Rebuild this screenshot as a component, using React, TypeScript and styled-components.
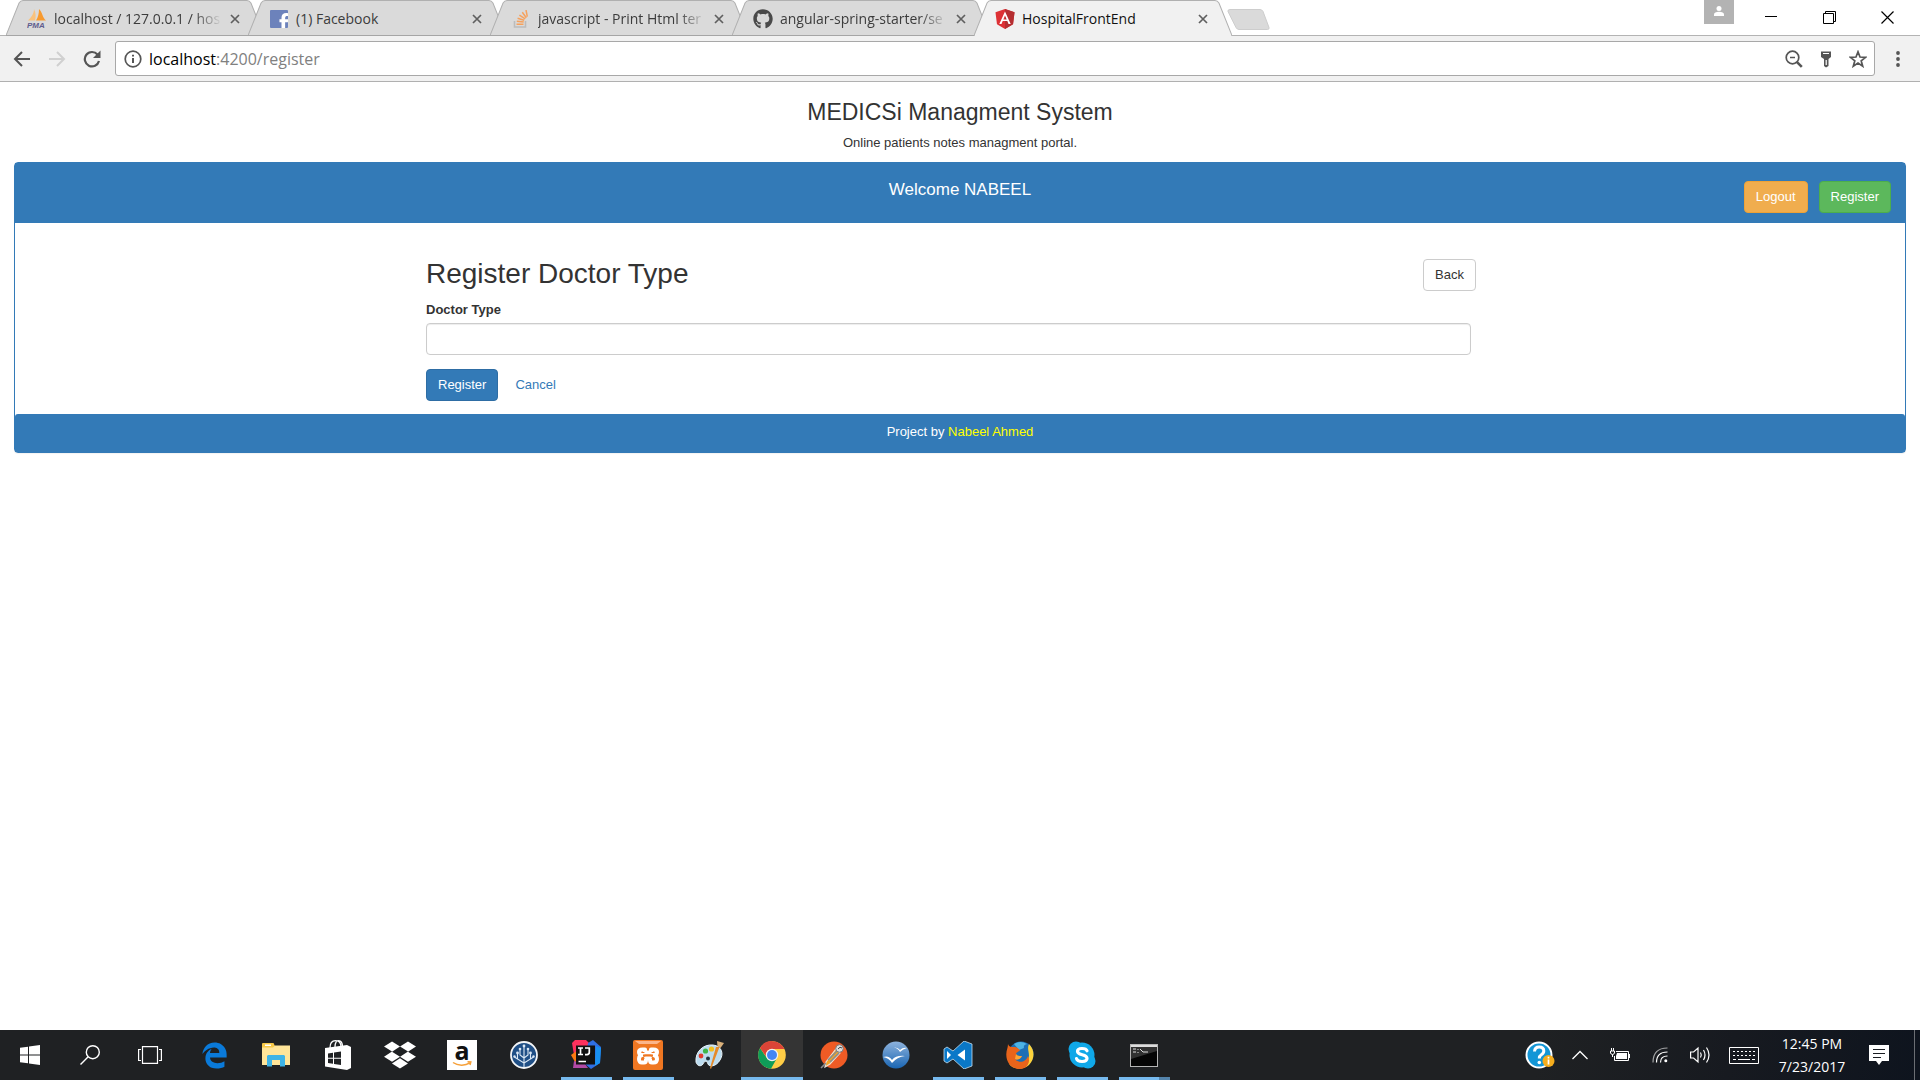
import React from "react";
import styled, { createGlobalStyle } from "styled-components";
import {
  FaDropbox,
  FaEdgeLegacy,
  FaFacebookF,
  FaGithub,
} from "react-icons/fa6";

const systemFont = `"Open Sans", "Noto Sans", sans-serif`;
const pageFont = `"Liberation Sans", Arial, sans-serif`;
const brandBlue = "#337ab7";

const GlobalStyle = createGlobalStyle`
  *, *::before, *::after { box-sizing: border-box; }
  body { margin: 0; background: #fff; }
  button, input { font: inherit; }
  svg { display: block; flex: none; }
`;

const Screen = styled.div`
  display: flex;
  flex-direction: column;
  min-height: 100vh;
  font-family: ${systemFont};
`;

/* ---------- browser window ---------- */

const TitleBar = styled.header`
  display: flex;
  align-items: flex-start;
  height: 36px;
  padding: 0 4px 0 6px;
  background: #fff;
  box-shadow: inset 0 -1px #b3b3b3;
`;

const TabList = styled.nav`
  display: flex;
  align-items: flex-start;
`;

const Tab = styled.div<{ $active?: boolean }>`
  position: relative;
  display: flex;
  align-items: center;
  width: 258px;
  height: 36px;
  padding: 2px 16px 0 21px;
  color: ${(p) => (p.$active ? "#111" : "#3c3c3c")};
  z-index: ${(p) => (p.$active ? 1 : 0)};
  & + & {
    margin-left: -16px;
  }
`;

const TabShape = styled.svg`
  position: absolute;
  inset: 0;
  width: 100%;
  height: 100%;
  z-index: -1;
`;

const TabLink = styled.a`
  display: flex;
  align-items: center;
  gap: 7px;
  flex: 1;
  min-width: 0;
  color: inherit;
  text-decoration: none;
`;

const TabIcon = styled.span`
  display: flex;
  justify-content: center;
  width: 20px;
`;

const TabTitle = styled.span<{ $fade?: boolean }>`
  flex: 1;
  white-space: nowrap;
  font-size: 14px;
  line-height: 20px;
  mask-image: ${(p) =>
    p.$fade ? "linear-gradient(90deg, #000 calc(100% - 28px), transparent)" : "none"};
`;

const PlainButton = styled.button`
  display: flex;
  align-items: center;
  justify-content: center;
  padding: 0;
  border: 0;
  background: transparent;
  color: inherit;
`;

const TabClose = styled(PlainButton)`
  width: 26px;
  height: 20px;
  color: #5f5f5f;
`;

const NewTab = styled(PlainButton)`
  margin: 9px 0 0 -5px;
  z-index: 2;
`;

const WindowButtons = styled.div`
  display: flex;
  align-items: flex-start;
  margin-left: auto;
`;

const ProfileButton = styled(PlainButton)`
  width: 30px;
  height: 24px;
  margin-right: 8px;
  background: #b3b3b3;
`;

const WindowButton = styled(PlainButton)`
  width: 58px;
  height: 34px;
`;

const Toolbar = styled.div`
  display: flex;
  align-items: center;
  height: 46px;
  padding: 0 10px;
  background: #f1f1f1;
  border-bottom: 1px solid #b0b0b0;
`;

const NavButton = styled(PlainButton)`
  width: 24px;
  height: 24px;
  margin-right: 11px;
`;

const AddressBar = styled.form`
  display: flex;
  align-items: center;
  flex: 1;
  height: 35px;
  margin-right: 11px;
  padding: 0 4px 0 8px;
  border: 1px solid #a8a8a8;
  border-radius: 3px;
  background: #fff;
  font-size: 16px;
  line-height: 22px;
`;

const AddressHost = styled.label`
  margin-left: 7px;
  color: #000;
`;

const AddressInput = styled.input`
  flex: 1;
  min-width: 0;
  padding: 0;
  border: 0;
  outline: 0;
  background: transparent;
  color: #808080;
`;

const AddressAction = styled(PlainButton)`
  width: 24px;
  height: 24px;
  margin-left: 8px;
`;

const MenuButton = styled(PlainButton)`
  width: 24px;
  height: 24px;
`;

/* ---------- hospital page ---------- */

const Page = styled.main`
  flex: 1;
  padding: 17px 14px 0;
  background: #fff;
  color: #333;
  font-family: ${pageFont};
  font-size: 13px;
  line-height: 18px;
`;

const Masthead = styled.div`
  display: flex;
  flex-direction: column;
  gap: 9px;
  margin-bottom: 10px;
  text-align: center;
`;

const SiteTitle = styled.h1`
  margin: 0;
  font-size: 23px;
  font-weight: 400;
  line-height: 26px;
`;

const Text = styled.p`
  margin: 0;
`;

const Panel = styled.section`
  border: 1px solid ${brandBlue};
  border-radius: 4px;
  background: #fff;
  box-shadow: 0 1px 1px rgba(0, 0, 0, 0.05);
`;

const PanelHeading = styled.div`
  display: grid;
  grid-template-columns: 1fr auto 1fr;
  align-items: start;
  padding: 16px 14px 10px;
  background: ${brandBlue};
  color: #fff;
`;

const Welcome = styled.h2`
  grid-column: 2;
  margin: 0;
  font-size: 17px;
  font-weight: 400;
  line-height: 22px;
`;

const HeadingActions = styled.div`
  display: flex;
  justify-content: flex-end;
  gap: 11px;
  padding-top: 2px;
`;

const tones = {
  primary: { bg: "#337ab7", border: "#2e6da4", text: "#fff" },
  success: { bg: "#5cb85c", border: "#4cae4c", text: "#fff" },
  warning: { bg: "#f0ad4e", border: "#eea236", text: "#fff" },
  plain: { bg: "#fff", border: "#ccc", text: "#333" },
};

const Button = styled.button<{ $tone: keyof typeof tones }>`
  height: 32px;
  padding: 0 11px;
  border: 1px solid ${(p) => tones[p.$tone].border};
  border-radius: 4px;
  background: ${(p) => tones[p.$tone].bg};
  color: ${(p) => tones[p.$tone].text};
  line-height: 18px;
`;

const PanelBody = styled.div`
  max-width: 1068px;
  margin: 0 auto;
  padding: 36px 0 13px;
`;

const FormHeader = styled.div`
  display: flex;
  align-items: flex-start;
  justify-content: space-between;
  margin: 0 18px 10px 0;
`;

const FormTitle = styled.h3`
  margin: 0;
  font-size: 28px;
  font-weight: 400;
  line-height: 30px;
`;

const Form = styled.form`
  margin-right: 23px;
`;

const FieldLabel = styled.label`
  display: block;
  margin-bottom: 4px;
  font-weight: 700;
`;

const Field = styled.input`
  display: block;
  width: 100%;
  height: 32px;
  padding: 0 11px;
  border: 1px solid #ccc;
  border-radius: 4px;
  box-shadow: inset 0 1px 1px rgba(0, 0, 0, 0.075);
`;

const FormActions = styled.div`
  display: flex;
  align-items: center;
  gap: 17px;
  margin-top: 14px;
`;

const CancelLink = styled.a`
  color: ${brandBlue};
  text-decoration: none;
`;

const PanelFooter = styled.footer`
  padding: 9px 14px 11px;
  border-radius: 3px 3px 0 0;
  background: ${brandBlue};
  color: #fff;
  text-align: center;
`;

const Author = styled.span`
  color: #ff0;
`;

/* ---------- taskbar ---------- */

const TaskBar = styled.footer`
  display: flex;
  height: 50px;
  background: linear-gradient(100deg, #1f2123 0%, #1f2123 80%, #171a20 90%, #0e141e 100%);
  color: #fff;
`;

const SystemButton = styled(PlainButton)`
  width: 60px;
`;

const AppList = styled.div`
  display: flex;
  margin-left: 3px;
`;

const AppButton = styled(PlainButton)<{ $state?: "open" | "active" | "stacked" }>`
  position: relative;
  width: 62px;
  background: ${(p) => (p.$state === "active" ? "#343434" : "transparent")};
  &::after {
    content: "";
    position: absolute;
    bottom: 0;
    height: 3px;
    left: ${(p) => (p.$state === "active" ? "0" : "6px")};
    right: ${(p) => (p.$state === "active" ? "0" : "5px")};
    background: ${(p) =>
      p.$state === "stacked"
        ? "linear-gradient(90deg, #76b9ed 40px, #5484ab 40px)"
        : p.$state
          ? "#76b9ed"
          : "none"};
  }
`;

const Tray = styled.div`
  display: flex;
  align-items: stretch;
  margin-left: auto;
  padding-right: 5px;
`;

const TrayButton = styled(PlainButton)<{ $wide?: boolean }>`
  width: ${(p) => (p.$wide ? "48px" : "40px")};
`;

const Clock = styled(PlainButton)`
  flex-direction: column;
  width: 88px;
  font-size: 14px;
  line-height: 23px;
`;

const NotificationButton = styled(PlainButton)`
  width: 59px;
  border-right: 1px solid #6b6e73;
  padding-right: 13px;
`;

/* ---------- drawings ---------- */

const CrossIcon = () => (
  <svg width="10" height="10" viewBox="0 0 10 10" stroke="currentColor" strokeWidth="1.7">
    <path d="M1 1l8 8M9 1l-8 8" />
  </svg>
);

const PmaIcon = () => (
  <svg width="20" height="20" viewBox="0 0 20 20">
    <path d="M7 0c2 4 2 8 1 11.500H1C4 8.500 7 5 7 0z" fill="#f9c27d" />
    <path d="M12 0c4 4 3 8 7 11.500H9c2-3 3-7 3-11.500z" fill="#f79a2f" />
    <text x="0" y="19" fontSize="8" fontWeight="700" fontStyle="italic" fill="#5f5d8d" fontFamily="Liberation Sans, sans-serif">
      PMA
    </text>
  </svg>
);

const FacebookIcon = () => (
  <svg width="18" height="18" viewBox="0 0 18 18">
    <rect width="18" height="18" rx="1" fill="#6c82bb" />
    <FaFacebookF x="6" y="3" width="11" height="15" color="#fff" />
  </svg>
);

const StackIcon = () => (
  <svg width="18" height="18" viewBox="0 0 18 18" fill="none">
    <path d="M2.500 11v6h11v-6" stroke="#bcbcbc" strokeWidth="1.600" />
    <path d="M4.500 14.300h7M4.800 11.300l6.900.8M5.600 8.200l6.600 2M7.400 5.100l5.800 3.700M10.300 2.200l4 5.600M14 0l1.300 6.600" stroke="#f6a15c" strokeWidth="1.500" />
  </svg>
);

const AngularIcon = () => (
  <svg width="20" height="20" viewBox="0 0 20 20">
    <path d="M10 0l9.500 3.300-1.500 12L10 20l-8-4.700-1.500-12z" fill="#dd3135" />
    <path d="M10 0l9.500 3.300-1.500 12L10 20z" fill="#b52e31" />
    <path d="M10 2.400L4.300 15h2.200l1.200-2.900h4.600l1.200 2.900h2.200zm0 4l1.700 4H8.300z" fill="#fff" />
  </svg>
);

const ArrowIcon = ({ flip, color }: { flip?: boolean; color: string }) => (
  <svg width="18" height="18" viewBox="0 0 18 18" fill="none" stroke={color} strokeWidth="2">
    <path d={flip ? "M1 9h15M9 2l7 7-7 7" : "M17 9H2M9 2L2 9l7 7"} />
  </svg>
);

const ReloadIcon = () => (
  <svg width="18" height="18" viewBox="0 0 18 18">
    <path d="M14.500 4.500A7.200 7.200 0 1 0 16 11" fill="none" stroke="#555" strokeWidth="2.200" />
    <path d="M17.500.5v7.500H10z" fill="#555" />
  </svg>
);

const InfoIcon = () => (
  <svg width="18" height="18" viewBox="0 0 18 18" fill="none" stroke="#555" strokeWidth="1.700">
    <circle cx="9" cy="9" r="7.800" />
    <path d="M9 8v5M9 4.800v1.800" strokeWidth="2" />
  </svg>
);

const ZoomOutIcon = () => (
  <svg width="18" height="18" viewBox="0 0 18 18" fill="none" stroke="#555">
    <circle cx="7.500" cy="7.500" r="6.300" strokeWidth="1.700" />
    <path d="M5 7.500h5" strokeWidth="1.500" />
    <path d="M11.800 11.800l5 5" strokeWidth="2.600" />
  </svg>
);

const KeyIcon = () => (
  <svg width="12" height="18" viewBox="0 0 12 18">
    <path d="M1 1.500h10V7L8.500 9v7L6 17.500 4 16V9L1 7z" fill="#555" />
    <path d="M3 3.500h6M6.200 10v5" stroke="#fff" strokeWidth="1.200" />
  </svg>
);

const StarIcon = () => (
  <svg width="18" height="18" viewBox="0 0 18 18" fill="none" stroke="#555" strokeWidth="1.700">
    <path d="M9 1.800l2 5.200 5.600.3-4.400 3.500 1.500 5.400L9 13.100l-4.700 3.100 1.500-5.400L1.400 7.300 7 7z" />
  </svg>
);

const DotsIcon = () => (
  <svg width="4" height="18" viewBox="0 0 4 18" fill="#555">
    <circle cx="2" cy="3" r="1.900" />
    <circle cx="2" cy="9" r="1.900" />
    <circle cx="2" cy="15" r="1.900" />
  </svg>
);

const UserIcon = () => (
  <svg width="12" height="12" viewBox="0 0 12 12" fill="#fff">
    <circle cx="6" cy="2.500" r="2.500" />
    <path d="M1 10V8.500C1 6.500 3 5.700 6 5.700s5 .8 5 2.800V10z" />
  </svg>
);

const MinimizeIcon = () => (
  <svg width="12" height="12" viewBox="0 0 12 12" stroke="#000">
    <path d="M0 5.500h12" />
  </svg>
);

const RestoreIcon = () => (
  <svg width="13" height="13" viewBox="0 0 13 13" fill="none" stroke="#000">
    <path d="M.5 2.500h10v10H.5zM2.500 2.500v-2h10v10h-2" />
  </svg>
);

const WindowCloseIcon = () => (
  <svg width="13" height="13" viewBox="0 0 13 13" stroke="#000" strokeWidth="1.200">
    <path d="M.5.500l12 12M12.500.500l-12 12" />
  </svg>
);

const WindowsIcon = () => (
  <svg width="20" height="20" viewBox="0 0 20 20" fill="#fff">
    <path d="M0 2.800L8 1.700v7.800H0zM9 1.500L20 0v9.500H9zM0 10.500h8v7.800l-8-1.100zM9 10.500h11V20L9 18.500z" />
  </svg>
);

const SearchIcon = () => (
  <svg width="20" height="20" viewBox="0 0 20 20" fill="none" stroke="#fff" strokeWidth="1.400">
    <circle cx="12.800" cy="7.200" r="6.500" />
    <path d="M8.200 11.800L.5 19.500" />
  </svg>
);

const TaskViewIcon = () => (
  <svg width="24" height="18" viewBox="0 0 24 18" fill="none" stroke="#fff" strokeWidth="1.200">
    <path d="M4.500.600h15v16.800h-15zM3 3.500H.6v11H3M21 3.500h2.400v11H21" />
  </svg>
);

const FolderIcon = () => (
  <svg width="28" height="24" viewBox="0 0 28 24">
    <path d="M0 1q0-1 1-1h10.500l1.500 3H28v19H0z" fill="#f7c948" />
    <path d="M3 1.500h6v1.500H3z" fill="#fff" />
    <path d="M0 4.500h11l2-2h15v19.500H0z" fill="#ffe599" />
    <path d="M5 23.500V13l1-1h16l1 1v10.500h-5v-6.500h-8v6.500z" fill="#3fb4e6" />
  </svg>
);

const StoreIcon = () => (
  <svg width="28" height="30" viewBox="0 0 28 30">
    <path d="M6 8C6 2 9 .7 11.500.7S17 2 17 7M11 7C11 2 13 .7 14.500.700 17 .7 18.500 3 18.500 7" fill="none" stroke="#fff" strokeWidth="1.300" />
    <path d="M1 8l22-3 4 2v21l-4 2L1 26.500z" fill="#fff" />
    <path d="M4 13.500l5-.8v5H4zM10 12.500l7-1v6.200h-7zM4 18.700h5v5l-5-.8zM10 18.700h7v6.200l-7-1z" fill="#202224" />
  </svg>
);

const AmazonTile = styled.span`
  display: flex;
  align-items: center;
  justify-content: center;
  width: 30px;
  height: 30px;
  background: #fff;
`;

const AmazonIcon = () => (
  <AmazonTile>
    <svg width="24" height="26" viewBox="0 0 24 26">
      <text x="12" y="18" textAnchor="middle" fontSize="25" fontWeight="700" fontFamily="Open Sans, sans-serif" fill="#111">
        a
      </text>
      <path d="M3 20.500c5 3.500 12 3.500 17 .4M17.500 19.800l3.300.2-.8 3" fill="none" stroke="#f6a13a" strokeWidth="1.500" />
    </svg>
  </AmazonTile>
);

const SourcetreeIcon = () => (
  <svg width="28" height="28" viewBox="0 0 28 28">
    <circle cx="14" cy="14" r="13" fill="#1f4f86" stroke="#f3f5f7" strokeWidth="1.800" />
    <path d="M14 26V5M14 22l-6.500-4v-5M14 22l6.500-4v-5M14 17l-4-3V8M14 17l4-3V8M7.500 18l-3-2M20.500 18l3-2" fill="none" stroke="#dbe8f5" strokeWidth="1.100" />
    <g fill="#dbe8f5">
      <circle cx="14" cy="5" r="1.400" /><circle cx="7.500" cy="12" r="1.400" /><circle cx="20.500" cy="12" r="1.400" />
      <circle cx="10" cy="8" r="1.300" /><circle cx="18" cy="8" r="1.300" /><circle cx="4.500" cy="15.500" r="1.200" /><circle cx="23.500" cy="15.500" r="1.200" />
    </g>
  </svg>
);

const IntellijIcon = () => (
  <svg width="30" height="30" viewBox="0 0 30 30">
    <path d="M1 3l3-3h11l4 4 2 10L4 21z" fill="#fe315d" />
    <path d="M0 15l7-5 8 10-11 2z" fill="#f97a12" />
    <path d="M17 3l5-3 8 7-1 16-9 6-6-5z" fill="#2f6fe4" />
    <path d="M25 6l5 2-1 15-5 3z" fill="#1790f0" />
    <path d="M3 21l11 3 3 4-15 0z" fill="#b24aa5" />
    <path d="M5 5.500h19v19H5z" fill="#111" />
    <path d="M7 8h5M7 14.500h5M9.500 8v6.500M14 8h4.300v4.300q0 2.300-2.300 2.300h-2M7.500 21.500H15" fill="none" stroke="#fff" strokeWidth="1.700" />
  </svg>
);

const XamppIcon = () => (
  <svg width="30" height="30" viewBox="0 0 30 30">
    <rect width="30" height="30" rx="2" fill="#ef7722" />
    <path d="M2 1h26l-4 3H6z" fill="#fbb58a" />
    <g fill="none" stroke="#fff" strokeWidth="4" strokeLinejoin="round" strokeLinecap="round">
      <path d="M12 9.500H9.500Q6 9.500 6 12q0 3 3.500 3Q6 15 6 19t3.500 3.500h1.500q2 0 2-2.500v-2h4v2q0 2.500 2 2.500h1.500q3.500 0 3.500-3.500t-3.500-4q3.500 0 3.500-3 0-2.500-3.500-2.500H18v3h-6z" />
    </g>
    <path d="M10 15.500h10M10.500 13v-1M19.500 13v-1M10.500 19v-1M19.500 19v-1" stroke="#ef7722" strokeWidth="1.800" />
  </svg>
);

const PaintIcon = () => (
  <svg width="30" height="30" viewBox="0 0 30 30">
    <path d="M1 22C0 12 8 4 18 5c9 1 11 9 7 15-4 7-11 7-12 4-1-4-4-3-5 0-2 3-6 2-7-2z" fill="#bcdcef" stroke="#eaf5fb" />
    <circle cx="6" cy="16" r="2.400" fill="#e23b2e" />
    <circle cx="10.500" cy="11" r="2.600" fill="#3fb54a" />
    <circle cx="16.500" cy="9" r="2.600" fill="#f4c020" />
    <circle cx="13" cy="18.500" r="2" fill="#22333f" />
    <path d="M24.500 7L16 29l-1-1 6-21z" fill="#e58a2a" />
    <path d="M22 1l7 2-3.500 5-3-1.500z" fill="#d8b07a" />
  </svg>
);

const ChromeIcon = () => (
  <svg width="28" height="28" viewBox="0 0 28 28">
    <circle cx="14" cy="14" r="13.800" fill="#ffcd46" />
    <path d="M2 7a13.800 13.800 0 0 0 11 20.800L19 17l-9.500 1z" fill="#0f9d58" />
    <path d="M2 7a13.800 13.800 0 0 1 24.400 1H14a6 6 0 0 0-5.500 8z" fill="#db4437" />
    <circle cx="14" cy="14" r="6.200" fill="#f1f1f1" />
    <circle cx="14" cy="14" r="5" fill="#4285f4" />
  </svg>
);

const PostmanIcon = () => (
  <svg width="30" height="28" viewBox="0 0 30 28">
    <circle cx="15" cy="14" r="13.500" fill="#ef5b25" />
    <path d="M17 8l4 4-10 11-5 3 1-5z" fill="#f5a623" stroke="#e8e0d8" strokeWidth="1.200" />
    <path d="M9 19l9-9M11 21l9-9M2 27l5-5" stroke="#8c8c8c" strokeWidth="1.600" />
    <circle cx="20.500" cy="7.500" r="3.800" fill="#ddd" stroke="#777" />
    <path d="M19 8q2-3 4-1" stroke="#444" fill="none" />
  </svg>
);

const OpenOfficeIcon = () => (
  <svg width="28" height="28" viewBox="0 0 28 28">
    <defs>
      <linearGradient id="officeBlue" x2="0" y2="1">
        <stop offset="0" stopColor="#8db2dc" />
        <stop offset="1" stopColor="#1a66b3" />
      </linearGradient>
    </defs>
    <circle cx="14" cy="14" r="13.500" fill="url(#officeBlue)" />
    <path d="M12 6.500q4-.5 6 2.500 3-3 7-2-4 1-7 4-2-4-6-4.500zM1 16q6-2 9 3 4-5 13-4-8 1-13 7-3-5-9-6z" fill="#fff" />
  </svg>
);

const CodeIcon = () => (
  <svg width="30" height="28" viewBox="0 0 30 28">
    <path d="M21 0l8 3v22l-8 3L10 18l-6 4-3-2V8l3-2 6 4z" fill="#0a78c8" stroke="#c7dff0" strokeWidth=".8" />
    <path d="M22 8.500v11L14.500 14zM4 10v8l4-4z" fill="#fff" />
  </svg>
);

const FirefoxIcon = () => (
  <svg width="28" height="28" viewBox="0 0 28 28">
    <circle cx="15" cy="13" r="12.500" fill="#1c6fb5" />
    <path d="M8 3q6-4 13 0-4 1-3 4l-5 2z" fill="#4cb3e4" />
    <path d="M23 3c6 6 6 15 0 21-7 6-16 4-20-1 8 4 19 1 20-8 0-5-2-7 0-12z" fill="#fdd33c" />
    <path d="M2 3c1 3 3 3 6 3 2 0 3 0 6 3-1 2-4 2-4 4 1 2 3 2 6 2-2 4-5 4-7 3 4 5 11 3 13-3 3 6-1 13-8 13C5 28 0 21 .3 13 .4 9 2 7 2 3z" fill="#e8641b" />
    <path d="M10 13c1 2 3 2 6 2-2 4-5 4-7 3z" fill="#fba634" />
  </svg>
);

const SkypeIcon = () => (
  <svg width="28" height="28" viewBox="0 0 28 28">
    <circle cx="14" cy="14" r="12.500" fill="#10a8e8" />
    <circle cx="8" cy="8" r="7.500" fill="#10a8e8" />
    <circle cx="20" cy="20" r="7.500" fill="#10a8e8" />
    <path d="M19 9.800c-1-3-9.500-3.300-9.500.5 0 4.700 9.500 2.200 9.500 7 0 4.200-9.300 4.200-10.500.3" fill="none" stroke="#fff" strokeWidth="3.200" strokeLinecap="round" />
  </svg>
);

const TerminalIcon = () => (
  <svg width="28" height="23" viewBox="0 0 28 23">
    <rect x=".5" y=".5" width="27" height="22" fill="#050505" stroke="#b5b5b5" />
    <path d="M1 2h26" stroke="#ddd" strokeWidth="2" />
    <path d="M1 3h26v4L1 15z" fill="#444" opacity=".7" />
    <path d="M3 5h3M3 8h3M8 5v1M8 8v1M10 5l3 3h5" fill="none" stroke="#ddd" />
  </svg>
);

const HelpIcon = () => (
  <svg width="30" height="28" viewBox="0 0 30 28">
    <circle cx="14" cy="14" r="12.500" fill="#1396d6" stroke="#fff" strokeWidth="2" />
    <path d="M9.500 10.500q.3-4.500 4.700-4.500 4.600 0 4.600 4 0 2.300-2.500 3.800-2 1.200-2 3.700" fill="none" stroke="#fff" strokeWidth="3" />
    <circle cx="14.300" cy="21.500" r="1.800" fill="#fff" />
    <circle cx="23.500" cy="20" r="6" fill="#f5ad1d" />
    <path d="M23.500 18.500v5M23.500 15.800v1.600" stroke="#fff" strokeWidth="1.700" />
  </svg>
);

const ChevronIcon = () => (
  <svg width="16" height="10" viewBox="0 0 16 10" fill="none" stroke="#fff" strokeWidth="1.300">
    <path d="M.5 9L8 1.500 15.500 9" />
  </svg>
);

const BatteryIcon = () => (
  <svg width="20" height="14" viewBox="0 0 20 14" fill="none" stroke="#fff">
    <path d="M1.500 0v3M3.500 0v3M.5 3h4v2q0 1-2 1.500-2-.5-2-1.500zM2.500 6.500V9M6 3.500h12.500v9h-14V8M19.500 6v4" />
    <path d="M7 5h10v6H6V8z" fill="#fff" stroke="none" />
  </svg>
);

const WifiIcon = () => (
  <svg width="16" height="16" viewBox="0 0 16 16" fill="none" stroke="#fff" strokeWidth="1.200">
    <path d="M1 15.500Q1 1 15.500 1" opacity=".6" />
    <path d="M4.500 15.500q0-10.500 11-10.500M8.500 15.500q0-6.500 7-6.500" />
    <circle cx="13.800" cy="13.800" r="1.500" fill="#fff" stroke="none" />
  </svg>
);

const VolumeIcon = () => (
  <svg width="20" height="18" viewBox="0 0 20 18" fill="none" stroke="#fff" strokeWidth="1.200">
    <path d="M.6 6h3L8 2v14l-4.400-4h-3zM10.500 6.500q1.500 2.500 0 5M13.500 4q3 5 0 10" />
    <path d="M16.500 1.500q5 7.500 0 15" />
  </svg>
);

const KeyboardIcon = () => (
  <svg width="30" height="17" viewBox="0 0 30 17" fill="none" stroke="#fff">
    <path d="M.5.500h29v16H.5z" />
    <path d="M4 4.500h23M4 8.500h23" strokeDasharray="2 2" />
    <path d="M4 12.500h3M9 12.500h12M23 12.500h3" />
  </svg>
);

const NotificationIcon = () => (
  <svg width="20" height="20" viewBox="0 0 20 20">
    <path d="M0 0h20v16h-7l-3 4-3-4H0z" fill="#fff" />
    <path d="M4 4.500h12M4 8.500h12M4 12.500h8" stroke="#1a1d22" />
  </svg>
);

/* ---------- data ---------- */

const tabs = [
  { title: "localhost / 127.0.0.1 / hos", icon: <PmaIcon />, fade: true },
  { title: "(1) Facebook", icon: <FacebookIcon /> },
  { title: "javascript - Print Html ter", icon: <StackIcon />, fade: true },
  { title: "angular-spring-starter/se", icon: <FaGithub size={20} color="#4a4a4a" />, fade: true },
  { title: "HospitalFrontEnd", icon: <AngularIcon />, active: true },
];

const apps: { name: string; icon: React.ReactNode; state?: "open" | "active" | "stacked" }[] = [
  { name: "Edge", icon: <FaEdgeLegacy size={27} color="#0a7ad9" /> },
  { name: "File Explorer", icon: <FolderIcon /> },
  { name: "Store", icon: <StoreIcon /> },
  { name: "Dropbox", icon: <FaDropbox size={32} /> },
  { name: "Amazon", icon: <AmazonIcon /> },
  { name: "Sourcetree", icon: <SourcetreeIcon /> },
  { name: "IntelliJ IDEA", icon: <IntellijIcon />, state: "open" },
  { name: "XAMPP", icon: <XamppIcon />, state: "open" },
  { name: "Paint", icon: <PaintIcon /> },
  { name: "Chrome", icon: <ChromeIcon />, state: "active" },
  { name: "Postman", icon: <PostmanIcon /> },
  { name: "OpenOffice", icon: <OpenOfficeIcon /> },
  { name: "Visual Studio Code", icon: <CodeIcon />, state: "open" },
  { name: "Firefox", icon: <FirefoxIcon />, state: "open" },
  { name: "Skype", icon: <SkypeIcon />, state: "open" },
  { name: "Command Prompt", icon: <TerminalIcon />, state: "stacked" },
];

export default function App() {
  return (
    <Screen>
      <GlobalStyle />
      <TitleBar>
        <TabList aria-label="Open tabs">
          {tabs.map((tab) => (
            <Tab key={tab.title} $active={tab.active}>
              <TabShape viewBox="0 0 257 36" preserveAspectRatio="none" aria-hidden="true">
                <path
                  d="M0 35.500L13 3q1.500-2.500 4-2.500h223q2.500 0 4 2.500l13 32.500"
                  fill={tab.active ? "#f1f1f1" : "#dadada"}
                  stroke="#b0b0b0"
                />
                {tab.active && <path d="M1 35.500h255" stroke="#f1f1f1" />}
                {!tab.active && <path d="M0 35.500h257" stroke="#a5a5a5" />}
              </TabShape>
              <TabLink href="#">
                <TabIcon>{tab.icon}</TabIcon>
                <TabTitle $fade={tab.fade}>{tab.title}</TabTitle>
              </TabLink>
              <TabClose type="button" aria-label={`Close ${tab.title}`}>
                <CrossIcon />
              </TabClose>
            </Tab>
          ))}
        </TabList>
        <NewTab type="button" aria-label="New tab">
          <svg width="43" height="21" viewBox="0 0 43 21">
            <path d="M3 .5h30q2 0 3 2l6 16q.5 2-1.500 2H12q-2 0-3-2L1 2.500Q.5.5 3 .5z" fill="#dadada" stroke="#cdcdcd" />
          </svg>
        </NewTab>
        <WindowButtons>
          <ProfileButton type="button" aria-label="Profile"><UserIcon /></ProfileButton>
          <WindowButton type="button" aria-label="Minimize"><MinimizeIcon /></WindowButton>
          <WindowButton type="button" aria-label="Restore"><RestoreIcon /></WindowButton>
          <WindowButton type="button" aria-label="Close window"><WindowCloseIcon /></WindowButton>
        </WindowButtons>
      </TitleBar>

      <Toolbar>
        <NavButton type="button" aria-label="Back"><ArrowIcon color="#555" /></NavButton>
        <NavButton type="button" aria-label="Forward"><ArrowIcon flip color="#d0d0d0" /></NavButton>
        <NavButton type="button" aria-label="Reload"><ReloadIcon /></NavButton>
        <AddressBar>
          <InfoIcon />
          <AddressHost htmlFor="address">localhost</AddressHost>
          <AddressInput id="address" defaultValue=":4200/register" />
          <AddressAction type="button" aria-label="Zoom out"><ZoomOutIcon /></AddressAction>
          <AddressAction type="button" aria-label="Saved passwords"><KeyIcon /></AddressAction>
          <AddressAction type="button" aria-label="Bookmark"><StarIcon /></AddressAction>
        </AddressBar>
        <MenuButton type="button" aria-label="Menu"><DotsIcon /></MenuButton>
      </Toolbar>

      <Page>
        <Masthead>
          <SiteTitle>MEDICSi Managment System</SiteTitle>
          <Text>Online patients notes managment portal.</Text>
        </Masthead>
        <Panel>
          <PanelHeading>
            <Welcome>Welcome NABEEL</Welcome>
            <HeadingActions>
              <Button type="button" $tone="warning">Logout</Button>
              <Button type="button" $tone="success">Register</Button>
            </HeadingActions>
          </PanelHeading>
          <PanelBody>
            <FormHeader>
              <FormTitle>Register Doctor Type</FormTitle>
              <Button type="button" $tone="plain">Back</Button>
            </FormHeader>
            <Form>
              <FieldLabel htmlFor="doctorType">Doctor Type</FieldLabel>
              <Field id="doctorType" type="text" />
              <FormActions>
                <Button type="button" $tone="primary">Register</Button>
                <CancelLink href="#">Cancel</CancelLink>
              </FormActions>
            </Form>
          </PanelBody>
          <PanelFooter>
            Project by <Author>Nabeel Ahmed</Author>
          </PanelFooter>
        </Panel>
      </Page>

      <TaskBar>
        <SystemButton type="button" aria-label="Start"><WindowsIcon /></SystemButton>
        <SystemButton type="button" aria-label="Search"><SearchIcon /></SystemButton>
        <SystemButton type="button" aria-label="Task view"><TaskViewIcon /></SystemButton>
        <AppList>
          {apps.map((app) => (
            <AppButton key={app.name} type="button" aria-label={app.name} $state={app.state}>
              {app.icon}
            </AppButton>
          ))}
        </AppList>
        <Tray>
          <TrayButton type="button" aria-label="Help"><HelpIcon /></TrayButton>
          <TrayButton type="button" aria-label="Show hidden icons"><ChevronIcon /></TrayButton>
          <TrayButton type="button" aria-label="Battery"><BatteryIcon /></TrayButton>
          <TrayButton type="button" aria-label="Network"><WifiIcon /></TrayButton>
          <TrayButton type="button" aria-label="Volume"><VolumeIcon /></TrayButton>
          <TrayButton type="button" aria-label="Touch keyboard" $wide><KeyboardIcon /></TrayButton>
          <Clock type="button">
            <span>12:45 PM</span>
            <span>7/23/2017</span>
          </Clock>
          <NotificationButton type="button" aria-label="Notifications"><NotificationIcon /></NotificationButton>
        </Tray>
      </TaskBar>
    </Screen>
  );
}
